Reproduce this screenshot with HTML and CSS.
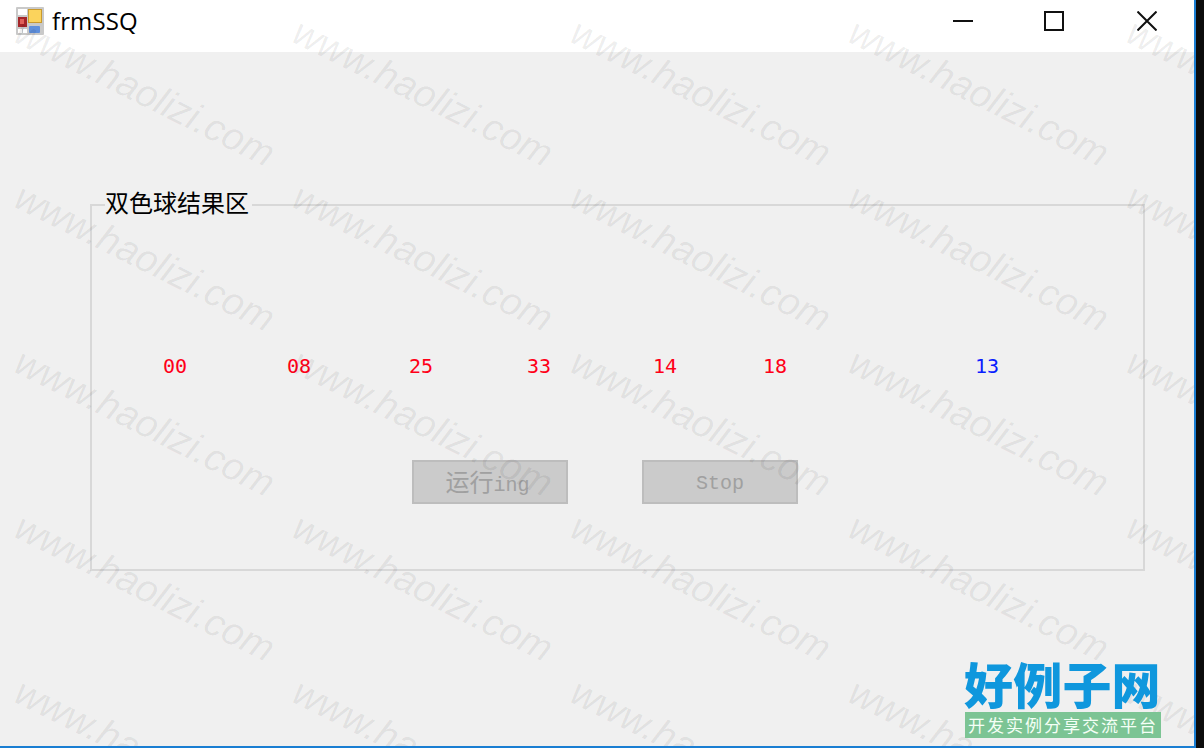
FILE: index.html
```html
<!DOCTYPE html>
<html lang="zh-CN">
<head>
<meta charset="utf-8">
<title>frmSSQ</title>
<link rel="stylesheet" href="styles.css">
</head>
<body>
<div class="window">
  <header class="titlebar">
    <svg class="app-icon" width="28" height="28" viewBox="0 0 28 28">
      <rect x="0" y="0" width="28" height="28" rx="1" fill="#c9c9c9"/>
      <rect x="2" y="2" width="9" height="6" fill="#fff"/>
      <rect x="12" y="2" width="14" height="14" fill="#c99a2e"/>
      <rect x="13" y="3" width="12" height="12" fill="#fbd35c"/>
      <rect x="2" y="10" width="9" height="10" fill="#a5262a"/>
      <rect x="4" y="12" width="4" height="5" fill="#e0605a"/>
      <rect x="13" y="19" width="11" height="7" rx="1" fill="#5f8fdc"/>
      <rect x="2" y="22" width="4" height="4" fill="#fff"/>
      <rect x="7" y="22" width="4" height="4" fill="#fff"/>
    </svg>
    <span class="title">frmSSQ</span>
    <div class="controls">
      <svg class="ctl ctl-min" width="20" height="20" viewBox="0 0 20 20"><path d="M0 10H20" stroke="#111" stroke-width="2"/></svg>
      <svg class="ctl ctl-max" width="20" height="20" viewBox="0 0 20 20"><rect x="1" y="1" width="18" height="18" fill="none" stroke="#111" stroke-width="2"/></svg>
      <svg class="ctl" width="20" height="20" viewBox="0 0 20 20"><path d="M0.5 0.5L19.5 19.5M19.5 0.5L0.5 19.5" stroke="#111" stroke-width="2"/></svg>
    </div>
  </header>
  <main class="client">
    <fieldset class="group">
      <legend class="group-label">双色球结果区</legend>
      <div class="numbers">
        <span class="num red">00</span>
        <span class="num red">08</span>
        <span class="num red">25</span>
        <span class="num red">33</span>
        <span class="num red">14</span>
        <span class="num red">18</span>
        <span class="num blue">13</span>
      </div>
      <div class="actions">
        <button class="btn btn-run" disabled><span class="cjk">运行</span>ing</button>
        <button class="btn btn-stop" disabled>Stop</button>
      </div>
    </fieldset>
  </main>
  <div class="watermarks" aria-hidden="true">
    <span>www.haolizi.com</span><span>www.haolizi.com</span><span>www.haolizi.com</span><span>www.haolizi.com</span><span>www.haolizi.com</span>
    <span>www.haolizi.com</span><span>www.haolizi.com</span><span>www.haolizi.com</span><span>www.haolizi.com</span><span>www.haolizi.com</span>
    <span>www.haolizi.com</span><span>www.haolizi.com</span><span>www.haolizi.com</span><span>www.haolizi.com</span><span>www.haolizi.com</span>
    <span>www.haolizi.com</span><span>www.haolizi.com</span><span>www.haolizi.com</span><span>www.haolizi.com</span><span>www.haolizi.com</span>
    <span>www.haolizi.com</span><span>www.haolizi.com</span><span>www.haolizi.com</span><span>www.haolizi.com</span><span>www.haolizi.com</span>
  </div>
  <div class="logo">
    <div class="logo-name">好例子网</div>
    <div class="logo-tag">开发实例分享交流平台</div>
  </div>
</div>
</body>
</html>
```
FILE: styles.css
```css
* { box-sizing: border-box; }
html, body { margin: 0; height: 100%; overflow: hidden; }
body { background: #0c0c0c; }

.window {
  position: relative;
  width: 1196px;
  height: 748px;
  display: flex;
  flex-direction: column;
  overflow: hidden;
  background: #f0f0f0;
  border-right: 2px solid #1a7ed2;
  border-bottom: 2px solid #1a7ed2;
}

.titlebar {
  flex: none;
  height: 52px;
  display: flex;
  align-items: center;
  padding: 0 37px 0 16px;
  background: #fff;
}
.app-icon { flex: none; margin-top: -10px; }
.title {
  margin: -10px 0 0 8px;
  font: 24px/1 "Open Sans", "Noto Sans", sans-serif;
  letter-spacing: 0.1px;
  color: #000;
}
.controls {
  margin-left: auto;
  display: flex;
  align-items: center;
  margin-top: -10px;
}
.ctl { display: block; flex: none; }
.ctl-max { margin-left: 71px; margin-right: 73px; }

.client {
  flex: 1;
  padding: 136px 49px 0 90px;
}

.group {
  margin: 0;
  padding: 0;
  height: 383px;
  border: 2px solid #d8d8d8;
  min-width: 0;
}
.group-label {
  margin-left: 13px;
  padding: 0 3px 6px 0;
  font: 24px/28px "Noto Sans CJK SC", sans-serif;
  color: #000;
}

.numbers {
  display: grid;
  grid-template-columns: 124px 122px 118px 126px 110px 212px 24px;
  margin-top: 130px;
  padding-left: 71px;
  height: 28px;
  align-items: center;
}
.num {
  font: 20px/28px "DejaVu Sans Mono", monospace;
}
.red { color: #ff0018; }
.blue { color: #0a1eff; }

.actions {
  display: flex;
  gap: 74px;
  margin-top: 80px;
  padding-left: 320px;
}
.btn {
  width: 156px;
  height: 44px;
  padding: 0;
  border: 2px solid #bdbdbd;
  background: #cbcbcb;
  color: #a0a0a0;
  font: 20px/1 "Liberation Mono", monospace;
}
.btn-run { padding-right: 5px; }
.btn-stop { padding-top: 3px; }
.cjk { font: 24px/1 "Noto Sans CJK SC", sans-serif; }

.watermarks {
  position: absolute;
  left: 26px;
  top: 12px;
  display: grid;
  grid-template-columns: repeat(5, 278px);
  grid-auto-rows: 165px;
  pointer-events: none;
}
.watermarks span {
  display: block;
  width: 278px;
  font: italic 38.5px/1 "Liberation Sans", sans-serif;
  white-space: nowrap;
  color: rgba(0, 0, 0, 0.07);
  transform: rotate(26.5deg);
  transform-origin: left top;
}

.logo {
  position: absolute;
  left: 964px;
  top: 658px;
  width: 197px;
}
.logo-name {
  font: 900 49px/50px "Noto Sans CJK SC", sans-serif;
  letter-spacing: 0.2px;
  color: #0f97dd;
  white-space: nowrap;
}
.logo-tag {
  margin: 4px 0 0 1px;
  height: 26px;
  background: #7cc494;
  color: #f4fff6;
  font: 17px/25px "Noto Sans CJK SC", sans-serif;
  letter-spacing: 2px;
  text-align: center;
  white-space: nowrap;
}
```
